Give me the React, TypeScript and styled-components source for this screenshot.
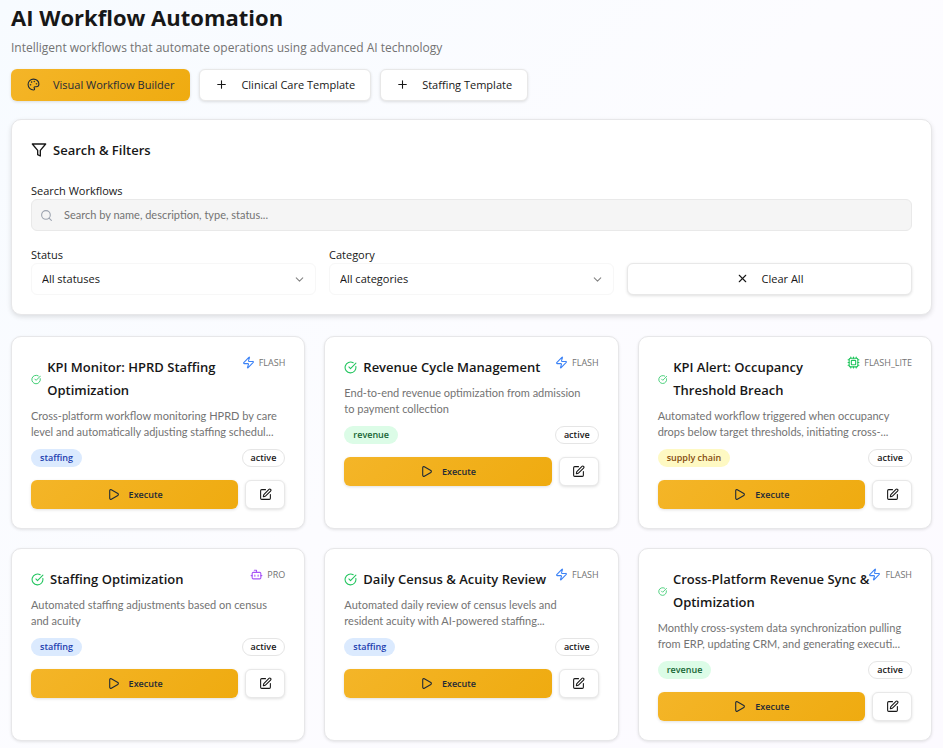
import React from "react";
import styled, { createGlobalStyle, css } from "styled-components";
import {
  Bot,
  ChevronDown,
  CircleCheckBig,
  Cpu,
  Palette,
  Play,
  Plus,
  Search,
  SquarePen,
  X,
  Zap,
} from "lucide-react";

const GlobalStyle = createGlobalStyle`
  *, *::before, *::after { box-sizing: border-box; }
  body {
    margin: 0;
    font-family: "Open Sans", "Noto Sans", sans-serif;
    font-size: 11px;
    color: #171717;
    background: linear-gradient(135deg, #f7fbff 0%, #fcfcff 50%, #fcfaff 100%);
    min-height: 100vh;
  }
  button, input, select { font: inherit; color: inherit; }
`;

const Page = styled.main`
  display: flex;
  flex-direction: column;
  padding: 1px 11px 7px;
`;

const PageTitle = styled.h1`
  margin: 0;
  font-size: 22px;
  line-height: 32px;
  font-weight: 700;
`;

const Subtitle = styled.p`
  margin: 5px 0 11px;
  font-size: 12px;
  line-height: 20px;
  color: #737373;
`;

const Actions = styled.div`
  display: flex;
  flex-wrap: wrap;
  gap: 9px;
  margin-bottom: 18px;
`;

const primary = css`
  border-color: transparent;
  color: #1f2a37;
  background: linear-gradient(135deg, #f4b528, #efab10) border-box;
`;

const Button = styled.button<{ $primary?: boolean; $small?: boolean }>`
  display: inline-flex;
  align-items: center;
  justify-content: center;
  gap: ${(p) => (p.$small ? 9 : 13)}px;
  height: ${(p) => (p.$small ? 29 : 32)}px;
  padding: 0 15px 1px;
  border: 1px solid #e8e8e8;
  border-radius: 6px;
  background: #fff;
  font-size: ${(p) => (p.$small ? 9 : 11)}px;
  font-weight: ${(p) => (p.$small ? 600 : 500)};
  white-space: nowrap;
  box-shadow: 0 1px 3px rgba(0, 0, 0, 0.12);
  cursor: pointer;
  ${(p) => p.$primary && primary}
`;

const ExecuteButton = styled(Button)`
  flex: 1;
`;

const EditButton = styled(Button)`
  width: 40px;
  padding: 0;
`;

const panel = css`
  background: #fff;
  border: 1px solid #e7e7e9;
  border-radius: 10px;
`;

const FilterPanel = styled.section`
  ${panel}
  padding: 19px;
  margin-bottom: 21px;
  box-shadow: 0 2px 5px rgba(0, 0, 0, 0.12);
`;

const FilterTitle = styled.h2`
  display: flex;
  align-items: center;
  gap: 6px;
  margin: 0 0 22px;
  font-size: 13px;
  line-height: 22px;
  font-weight: 600;
`;

const Label = styled.label`
  display: block;
  line-height: 16px;
  font-weight: 500;
`;

const Field = styled.div`
  display: flex;
  align-items: center;
  position: relative;
`;

const FieldIcon = styled.span<{ $end?: boolean }>`
  position: absolute;
  ${(p) => (p.$end ? "right: 10px; color: #858585;" : "left: 9px; color: #9ca3af;")}
  display: flex;
  pointer-events: none;
`;

const SearchInput = styled.input`
  width: 100%;
  height: 32px;
  padding: 0 12px 1px 32px;
  border: 1px solid #e9e9e9;
  border-radius: 6px;
  background: #f5f5f5;
  font-family: Lato, "Open Sans", sans-serif;
  &::placeholder { color: #737373; opacity: 1; }
`;

const FilterGrid = styled.div`
  display: grid;
  grid-template-columns: repeat(3, minmax(0, 1fr));
  align-items: end;
  gap: 13px;
  margin-top: 16px;
`;

const Select = styled.select`
  appearance: none;
  width: 100%;
  height: 32px;
  padding: 0 28px 1px 10px;
  border: 1px solid #f7f7f7;
  border-radius: 6px;
  background: #fff;
`;

const CardGrid = styled.div`
  display: grid;
  grid-template-columns: repeat(3, minmax(0, 1fr));
  gap: 19px;
`;

const Card = styled.article`
  ${panel}
  padding: 19px;
  box-shadow: 0 1px 3px rgba(0, 0, 0, 0.1);
`;

const CardHeader = styled.header`
  display: flex;
  align-items: flex-start;
  justify-content: space-between;
`;

const CardHeading = styled.div`
  display: flex;
  align-items: center;
  gap: 6px;
  min-width: 0;
  color: #22c55e;
  svg { min-width: 0; }
`;

const CardTitle = styled.h3`
  margin: 0 -5px 0 0;
  font-size: 13px;
  line-height: 23px;
  font-weight: 600;
  color: #171717;
`;

const Model = styled.div`
  display: flex;
  align-items: center;
  flex-shrink: 0;
  gap: 4px;
  font-size: 9px;
  line-height: 13px;
  color: #737373;
`;

const Description = styled.p`
  margin: 6px 0 9px;
  padding-right: 6px;
  font-family: Lato, "Open Sans", sans-serif;
  line-height: 16px;
  color: #737373;
`;

const BadgeRow = styled.div`
  display: flex;
  justify-content: space-between;
  margin-bottom: 13px;
`;

type Tone = "staffing" | "revenue" | "supply chain" | "active";

const tones: Record<Tone, string> = {
  staffing: "background: #dbeafe; color: #1e40af;",
  revenue: "background: #dcfce7; color: #166534;",
  "supply chain": "background: #fef9c3; color: #854d0e;",
  active: "background: #fff; color: #171717; border-color: #e5e5e5;",
};

const Badge = styled.span<{ $tone: Tone }>`
  padding: 0 8px;
  border: 1px solid transparent;
  border-radius: 9px;
  font-size: 9px;
  line-height: 16px;
  font-weight: 600;
  ${(p) => tones[p.$tone]}
`;

const CardActions = styled.div`
  display: flex;
  gap: 7px;
`;

const FilterIcon = () => (
  <svg width="16" height="16" viewBox="0 0 24 24" fill="none" stroke="currentColor" strokeWidth="2" strokeLinecap="round" strokeLinejoin="round" aria-hidden="true">
    <polygon points="22 3 2 3 10 12.46 10 19 14 21 14 12.46 22 3" />
  </svg>
);

const models = {
  FLASH: <Zap size={13} color="#3b82f6" />,
  FLASH_LITE: <Cpu size={13} color="#22c55e" />,
  PRO: <Bot size={13} color="#a855f7" />,
};

interface Workflow {
  title: string;
  description: string;
  category: Tone;
  model: keyof typeof models;
}

const workflows: Workflow[] = [
  {
    title: "KPI Monitor: HPRD Staffing Optimization",
    description: "Cross-platform workflow monitoring HPRD by care level and automatically adjusting staffing schedul...",
    category: "staffing",
    model: "FLASH",
  },
  {
    title: "Revenue Cycle Management",
    description: "End-to-end revenue optimization from admission to payment collection",
    category: "revenue",
    model: "FLASH",
  },
  {
    title: "KPI Alert: Occupancy Threshold Breach",
    description: "Automated workflow triggered when occupancy drops below target thresholds, initiating cross-...",
    category: "supply chain",
    model: "FLASH_LITE",
  },
  {
    title: "Staffing Optimization",
    description: "Automated staffing adjustments based on census and acuity",
    category: "staffing",
    model: "PRO",
  },
  {
    title: "Daily Census & Acuity Review",
    description: "Automated daily review of census levels and resident acuity with AI-powered staffing...",
    category: "staffing",
    model: "FLASH",
  },
  {
    title: "Cross-Platform Revenue Sync & Optimization",
    description: "Monthly cross-system data synchronization pulling from ERP, updating CRM, and generating executi...",
    category: "revenue",
    model: "FLASH",
  },
];

const WorkflowCard = ({ title, description, category, model }: Workflow) => (
  <Card>
    <CardHeader>
      <CardHeading>
        <CircleCheckBig size={13} />
        <CardTitle>{title}</CardTitle>
      </CardHeading>
      <Model>
        {models[model]}
        {model}
      </Model>
    </CardHeader>
    <Description>{description}</Description>
    <BadgeRow>
      <Badge $tone={category}>{category}</Badge>
      <Badge $tone="active">active</Badge>
    </BadgeRow>
    <CardActions>
      <ExecuteButton type="button" $primary $small>
        <Play size={13} />
        Execute
      </ExecuteButton>
      <EditButton type="button" $small aria-label={`Edit ${title}`}>
        <SquarePen size={13} />
      </EditButton>
    </CardActions>
  </Card>
);

export default function App() {
  return (
    <>
      <GlobalStyle />
      <Page>
        <PageTitle>AI Workflow Automation</PageTitle>
        <Subtitle>Intelligent workflows that automate operations using advanced AI technology</Subtitle>
        <Actions>
          <Button type="button" $primary>
            <Palette size={13} />
            Visual Workflow Builder
          </Button>
          <Button type="button">
            <Plus size={13} />
            Clinical Care Template
          </Button>
          <Button type="button">
            <Plus size={13} />
            Staffing Template
          </Button>
        </Actions>

        <FilterPanel>
          <FilterTitle>
            <FilterIcon />
            Search &amp; Filters
          </FilterTitle>
          <Label htmlFor="search">Search Workflows</Label>
          <Field>
            <FieldIcon>
              <Search size={13} />
            </FieldIcon>
            <SearchInput id="search" type="text" placeholder="Search by name, description, type, status..." />
          </Field>
          <FilterGrid>
            <div>
              <Label htmlFor="status">Status</Label>
              <Field>
                <Select id="status">
                  <option>All statuses</option>
                </Select>
                <FieldIcon $end>
                  <ChevronDown size={13} />
                </FieldIcon>
              </Field>
            </div>
            <div>
              <Label htmlFor="category">Category</Label>
              <Field>
                <Select id="category">
                  <option>All categories</option>
                </Select>
                <FieldIcon $end>
                  <ChevronDown size={13} />
                </FieldIcon>
              </Field>
            </div>
            <Button type="button">
              <X size={13} />
              Clear All
            </Button>
          </FilterGrid>
        </FilterPanel>

        <CardGrid>
          {workflows.map((w) => (
            <WorkflowCard key={w.title} {...w} />
          ))}
        </CardGrid>
      </Page>
    </>
  );
}
